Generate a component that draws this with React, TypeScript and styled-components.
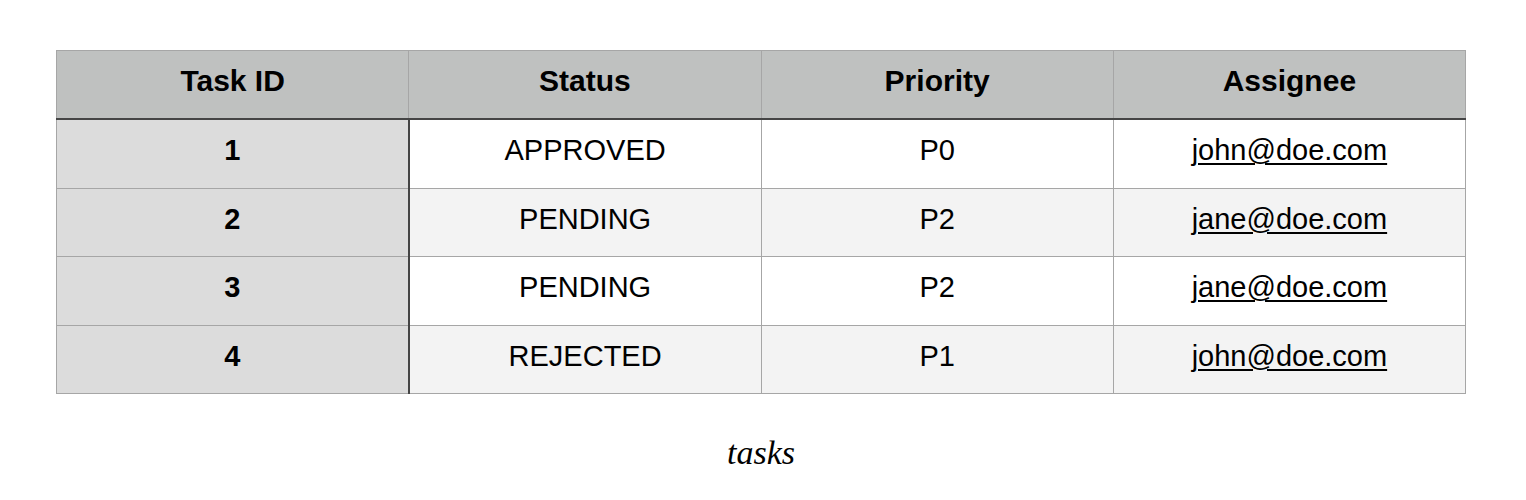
import React from "react";
import styled, { createGlobalStyle } from "styled-components";

const GlobalStyle = createGlobalStyle`
  html, body {
    margin: 0;
    padding: 0;
    background: #ffffff;
  }
  body {
    font-family: "Liberation Sans", Arial, Helvetica, sans-serif;
    color: #000;
  }
`;

const Figure = styled.figure`
  margin: 0;
  padding: 50px 0 0 56px;
  width: 1410px;
  display: flex;
  flex-direction: column;
  align-items: center;
`;

const Table = styled.table`
  width: 1410px;
  border-collapse: collapse;
  table-layout: fixed;
  border: 1px solid #a6a6a6;
  font-family: "Liberation Sans", Arial, Helvetica, sans-serif;
  font-size: 29px;
`;

const HeadCell = styled.th`
  background: #bfc1c0;
  font-weight: 700;
  font-size: 30px;
  height: 59px;
  padding: 0 0 8px;
  text-align: center;
  vertical-align: middle;
  border-left: 1px solid #a6a6a6;
  border-right: 1px solid #a6a6a6;
  border-bottom: 2px solid #454545;
`;

const Row = styled.tr<{ $shaded: boolean }>`
  background: ${(p) => (p.$shaded ? "#f3f3f3" : "#ffffff")};
`;

const Cell = styled.td`
  height: 61.5px;
  padding: 0 0 6px;
  text-align: center;
  vertical-align: middle;
  border: 1px solid #a6a6a6;
`;

const IdCell = styled(Cell)`
  background: #dcdcdc;
  font-weight: 700;
  border-right: 2px solid #454545;
`;

const MailLink = styled.a`
  color: #000;
  text-decoration: underline;
  text-underline-offset: 3px;
  text-decoration-thickness: 2px;
`;

const Caption = styled.figcaption`
  margin-top: 39px;
  font-family: "Liberation Serif", "Times New Roman", serif;
  font-style: italic;
  font-size: 34px;
  line-height: 1.15;
  color: #000;
`;

type Task = { id: number; status: string; priority: string; assignee: string };

const tasks: Task[] = [
  { id: 1, status: "APPROVED", priority: "P0", assignee: "john@doe.com" },
  { id: 2, status: "PENDING", priority: "P2", assignee: "jane@doe.com" },
  { id: 3, status: "PENDING", priority: "P2", assignee: "jane@doe.com" },
  { id: 4, status: "REJECTED", priority: "P1", assignee: "john@doe.com" },
];

export default function App() {
  return (
    <>
      <GlobalStyle />
      <Figure>
        <Table>
          <thead>
            <tr>
              <HeadCell>Task ID</HeadCell>
              <HeadCell>Status</HeadCell>
              <HeadCell>Priority</HeadCell>
              <HeadCell>Assignee</HeadCell>
            </tr>
          </thead>
          <tbody>
            {tasks.map((t, i) => (
              <Row key={t.id} $shaded={i % 2 === 1}>
                <IdCell>{t.id}</IdCell>
                <Cell>{t.status}</Cell>
                <Cell>{t.priority}</Cell>
                <Cell>
                  <MailLink href={`mailto:${t.assignee}`}>{t.assignee}</MailLink>
                </Cell>
              </Row>
            ))}
          </tbody>
        </Table>
        <Caption>tasks</Caption>
      </Figure>
    </>
  );
}
